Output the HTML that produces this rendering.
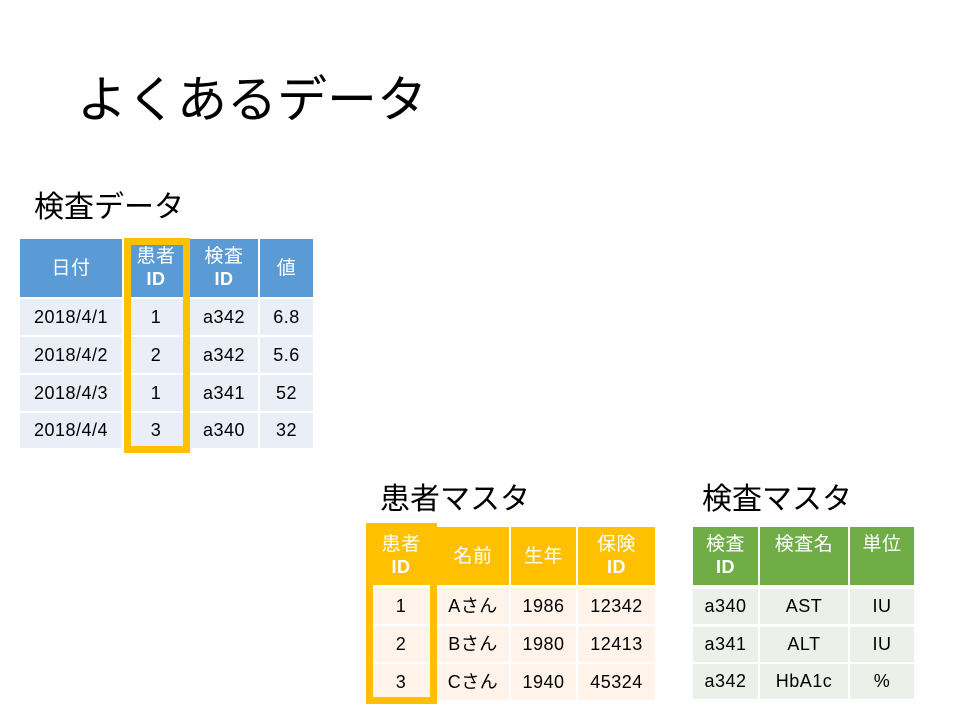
<!DOCTYPE html>
<html><head><meta charset="utf-8"><style>
body{margin:0;width:960px;height:720px;background:#fff;position:relative;overflow:hidden;font-family:"Liberation Sans","Noto Sans CJK JP",sans-serif;}
.t{position:absolute;color:#000;white-space:nowrap;line-height:1;}
.c{position:absolute;display:flex;align-items:center;justify-content:center;text-align:center;font-size:18px;line-height:23px;color:#000;letter-spacing:0.5px;}
.h{color:#fff;font-size:19px;}
.h b{font-size:18px;}
.box{position:absolute;border:7px solid #ffc000;box-sizing:border-box;}
</style></head><body>
<div class="t" style="left:77px;top:75px;font-size:50px;">よくあるデータ</div>
<div class="t" style="left:34px;top:193px;font-size:30px;">検査データ</div>
<div class="t" style="left:380px;top:485px;font-size:30px;">患者マスタ</div>
<div class="t" style="left:702px;top:485px;font-size:30px;">検査マスタ</div>

<!-- table 1 -->
<div class="c h" style="left:20px;top:239px;width:102px;height:58px;background:#5b9bd5">日付</div>
<div class="c h" style="left:124px;top:239px;width:64px;height:58px;background:#5b9bd5"><span>患者<br><b>ID</b></span></div>
<div class="c h" style="left:190px;top:239px;width:68px;height:58px;background:#5b9bd5"><span>検査<br><b>ID</b></span></div>
<div class="c h" style="left:260px;top:239px;width:53px;height:58px;background:#5b9bd5">値</div>
<div class="c" style="left:20px;top:299px;width:102px;height:36px;background:#e9eef7">2018/4/1</div>
<div class="c" style="left:124px;top:299px;width:64px;height:36px;background:#e9eef7">1</div>
<div class="c" style="left:190px;top:299px;width:68px;height:36px;background:#e9eef7">a342</div>
<div class="c" style="left:260px;top:299px;width:53px;height:36px;background:#e9eef7">6.8</div>
<div class="c" style="left:20px;top:337px;width:102px;height:36px;background:#e9eef7">2018/4/2</div>
<div class="c" style="left:124px;top:337px;width:64px;height:36px;background:#e9eef7">2</div>
<div class="c" style="left:190px;top:337px;width:68px;height:36px;background:#e9eef7">a342</div>
<div class="c" style="left:260px;top:337px;width:53px;height:36px;background:#e9eef7">5.6</div>
<div class="c" style="left:20px;top:375px;width:102px;height:36px;background:#e9eef7">2018/4/3</div>
<div class="c" style="left:124px;top:375px;width:64px;height:36px;background:#e9eef7">1</div>
<div class="c" style="left:190px;top:375px;width:68px;height:36px;background:#e9eef7">a341</div>
<div class="c" style="left:260px;top:375px;width:53px;height:36px;background:#e9eef7">52</div>
<div class="c" style="left:20px;top:413px;width:102px;height:35px;background:#e9eef7">2018/4/4</div>
<div class="c" style="left:124px;top:413px;width:64px;height:35px;background:#e9eef7">3</div>
<div class="c" style="left:190px;top:413px;width:68px;height:35px;background:#e9eef7">a340</div>
<div class="c" style="left:260px;top:413px;width:53px;height:35px;background:#e9eef7">32</div>
<div class="box" style="left:124px;top:238px;width:66px;height:215px;"></div>

<!-- table 2 -->
<div class="c h" style="left:366px;top:527px;width:70px;height:58px;background:#ffc000"><span>患者<br><b>ID</b></span></div>
<div class="c h" style="left:437px;top:527px;width:72px;height:58px;background:#ffc000">名前</div>
<div class="c h" style="left:511px;top:527px;width:65px;height:58px;background:#ffc000">生年</div>
<div class="c h" style="left:578px;top:527px;width:77px;height:58px;background:#ffc000"><span>保険<br><b>ID</b></span></div>
<div class="c" style="left:366px;top:588px;width:70px;height:36px;background:#fff3ea">1</div>
<div class="c" style="left:437px;top:588px;width:72px;height:36px;background:#fff3ea">Aさん</div>
<div class="c" style="left:511px;top:588px;width:65px;height:36px;background:#fff3ea">1986</div>
<div class="c" style="left:578px;top:588px;width:77px;height:36px;background:#fff3ea">12342</div>
<div class="c" style="left:366px;top:626px;width:70px;height:36px;background:#fff3ea">2</div>
<div class="c" style="left:437px;top:626px;width:72px;height:36px;background:#fff3ea">Bさん</div>
<div class="c" style="left:511px;top:626px;width:65px;height:36px;background:#fff3ea">1980</div>
<div class="c" style="left:578px;top:626px;width:77px;height:36px;background:#fff3ea">12413</div>
<div class="c" style="left:366px;top:664px;width:70px;height:36px;background:#fff3ea">3</div>
<div class="c" style="left:437px;top:664px;width:72px;height:36px;background:#fff3ea">Cさん</div>
<div class="c" style="left:511px;top:664px;width:65px;height:36px;background:#fff3ea">1940</div>
<div class="c" style="left:578px;top:664px;width:77px;height:36px;background:#fff3ea">45324</div>
<div class="box" style="left:366px;top:523px;width:71px;height:181px;"></div>

<!-- table 3 -->
<div class="c h" style="left:693px;top:527px;width:65px;height:58px;background:#70ad47"><span>検査<br><b>ID</b></span></div>
<div class="c h" style="left:760px;top:527px;width:88px;height:58px;background:#70ad47;align-items:flex-start;padding-top:6px;box-sizing:border-box">検査名</div>
<div class="c h" style="left:850px;top:527px;width:64px;height:58px;background:#70ad47;align-items:flex-start;padding-top:6px;box-sizing:border-box">単位</div>
<div class="c" style="left:693px;top:589px;width:65px;height:35px;background:#ebf1e9">a340</div>
<div class="c" style="left:760px;top:589px;width:88px;height:35px;background:#ebf1e9">AST</div>
<div class="c" style="left:850px;top:589px;width:64px;height:35px;background:#ebf1e9">IU</div>
<div class="c" style="left:693px;top:627px;width:65px;height:35px;background:#ebf1e9">a341</div>
<div class="c" style="left:760px;top:627px;width:88px;height:35px;background:#ebf1e9">ALT</div>
<div class="c" style="left:850px;top:627px;width:64px;height:35px;background:#ebf1e9">IU</div>
<div class="c" style="left:693px;top:664px;width:65px;height:35px;background:#ebf1e9">a342</div>
<div class="c" style="left:760px;top:664px;width:88px;height:35px;background:#ebf1e9">HbA1c</div>
<div class="c" style="left:850px;top:664px;width:64px;height:35px;background:#ebf1e9">%</div>
</body></html>
